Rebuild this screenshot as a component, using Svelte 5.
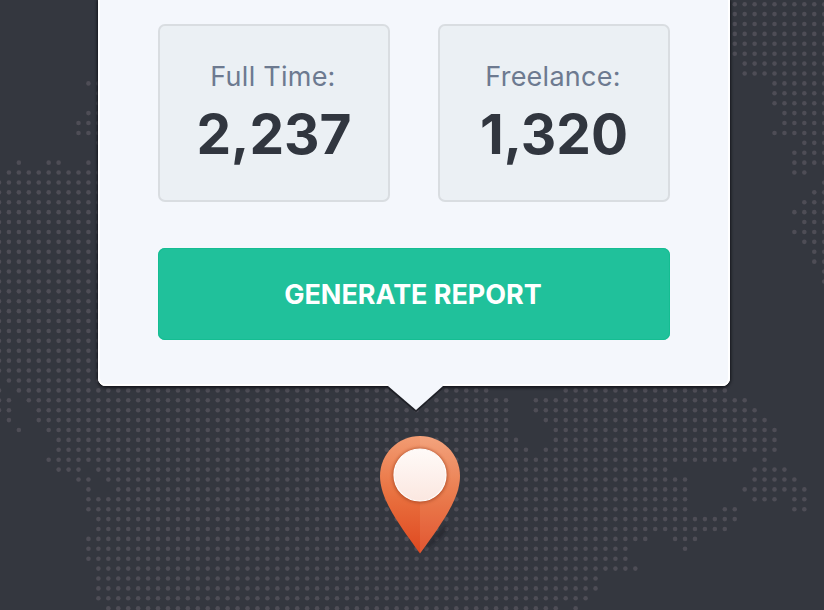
<script>
  const stats = [
    { label: 'Full Time:', value: '2,237' },
    { label: 'Freelance:', value: '1,320' },
  ];

  // Dotted world map: for each row, the inclusive column ranges that hold dots.
  const rows = {
    0: [[73, 82]], 1: [[73, 82]], 2: [[73, 82]], 3: [[73, 82]], 4: [[73, 82]], 5: [[73, 82]],
    6: [[74, 82]], 7: [[74, 82]],
    8: [[8, 9], [77, 82]], 9: [[9, 9], [77, 82]], 10: [[9, 9], [77, 82]],
    11: [[8, 9], [78, 82]], 12: [[7, 9], [78, 82]], 13: [[7, 9], [77, 82]],
    14: [[9, 9], [80, 82]], 15: [[79, 82]],
    16: [[1, 1], [4, 5], [8, 8], [79, 82]],
    17: [[0, 9], [79, 80]], 18: [[-1, 9], [82, 82]], 19: [[-1, 9], [81, 82]],
    20: [[-1, 9], [80, 82]], 21: [[-1, 9], [79, 82]], 22: [[-1, 9], [80, 82]],
    23: [[-1, 9], [79, 82]], 24: [[-1, 9], [80, 82]], 25: [[-1, 9], [81, 82]],
    26: [[-1, 9], [81, 82]], 27: [[-1, 9], [82, 82]], 28: [[-1, 9], [82, 82]],
    38: [[0, 9]],
    39: [[-1, -1], [1, 48], [56, 72]],
    40: [[-1, 0], [2, 50], [53, 74]],
    41: [[-1, 0], [3, 50], [53, 75]],
    42: [[0, 0], [3, 50], [54, 76]],
    43: [[1, 1], [4, 50], [55, 77]],
    44: [[5, 51], [55, 77]],
    45: [[5, 52], [54, 77]],
    46: [[4, 73], [76, 76]],
    47: [[5, 7], [9, 66], [75, 78]],
    48: [[7, 8], [10, 68], [75, 79]],
    49: [[8, 8], [11, 68], [74, 80]],
    50: [[8, 68], [75, 77], [79, 80]],
    51: [[8, 68], [72, 73], [79, 80]],
    52: [[9, 73]],
    53: [[9, 72]],
    54: [[8, 64], [67, 69]],
    55: [[8, 62], [68, 68]],
    56: [[8, 62]],
    57: [[9, 63]],
    58: [[9, 59]],
    59: [[9, 59]],
    60: [[9, 58]],
    61: [[10, 55], [57, 57]],
  };
  // The left landmass is solid through these rows.
  for (let r = 29; r < 38; r++) rows[r] = [[-1, 9]];

  const dots = [];
  for (const [r, ranges] of Object.entries(rows)) {
    for (const [from, to] of ranges) {
      for (let c = from; c <= to; c++) {
        dots.push({ x: 8.9 + c * 9.943, y: 4.2 + r * 9.902 });
      }
    }
  }
</script>

<main>
  <svg class="map" width="824" height="610" viewBox="0 0 824 610" aria-hidden="true">
    {#each dots as d}
      <circle cx={d.x} cy={d.y} r="2.3" />
    {/each}
  </svg>

  <section class="card">
    <div class="stats">
      {#each stats as s}
        <div class="stat">
          <span class="label">{s.label}</span>
          <span class="value">{s.value}</span>
        </div>
      {/each}
    </div>
    <button type="button">GENERATE REPORT</button>
    <svg class="tip" width="60" height="30" viewBox="0 0 60 30" aria-hidden="true">
      <path d="M4 4 L31 27 L57 4" fill="none" stroke="#15171c" stroke-width="2" opacity="0.7" />
      <path d="M3 0 L3 2 L31 26 L58 2 L58 0Z" fill="#f4f7fc" />
    </svg>
  </section>

  <svg class="pin" width="100" height="130" viewBox="370 430 100 130" aria-hidden="true">
    <defs>
      <linearGradient id="body" x1="0" y1="0" x2="0" y2="1">
        <stop offset="0" stop-color="#f29c73" />
        <stop offset="0.5" stop-color="#e9713f" />
        <stop offset="1" stop-color="#df4820" />
      </linearGradient>
      <linearGradient id="face" x1="0" y1="0" x2="0" y2="1">
        <stop offset="0" stop-color="#fffaf8" />
        <stop offset="1" stop-color="#fbe7e0" />
      </linearGradient>
      <filter id="soft" x="-30%" y="-30%" width="160%" height="160%">
        <feGaussianBlur stdDeviation="1.6" />
      </filter>
    </defs>
    <path d="M420 552 L446 524 Q449 529 443 535 Q434 545 420 552Z" fill="#202329" opacity="0.6" filter="url(#soft)" />
    <path d="M420 436 C442 436 460 454 460 476 C460 498 443 522 420 553.500 C397 522 380 498 380 476 C380 454 398 436 420 436Z" fill="url(#body)" />
    <path d="M420 436 C442 436 460 454 460 476 C460 498 443 522 420 553.500Z" fill="#fff" opacity="0.08" />
    <circle cx="420" cy="475.500" r="28" fill="#a84722" opacity="0.65" filter="url(#soft)" />
    <circle cx="420" cy="475" r="26" fill="url(#face)" stroke="#fff" stroke-width="1.200" />
  </svg>
</main>

<style>
  :global(body) {
    margin: 0;
    overflow: hidden;
  }
  main {
    position: relative;
    width: 824px;
    height: 610px;
    overflow: hidden;
    background: #34373f;
    font-family: Inter, Roboto, sans-serif;
  }
  .map {
    position: absolute;
    inset: 0;
    fill: #4e4d56;
  }
  .card {
    position: relative;
    box-sizing: border-box;
    width: 632px;
    height: 386px;
    margin-left: 98px;
    padding: 24px 60px 0;
    border-radius: 0 0 8px 8px;
    background: #f4f7fc;
    box-shadow: inset 0 -2px 0 #fff, inset 2px 0 0 #fff, inset -2px 0 0 #fff, 0 1px 3px 1px #15171c;
  }
  .stats {
    display: flex;
    gap: 48px;
  }
  .stat {
    box-sizing: border-box;
    display: flex;
    flex-direction: column;
    align-items: center;
    width: 232px;
    height: 178px;
    padding-top: 35px;
    border: 2px solid #d9dde1;
    border-radius: 7px;
    background: #ebf0f4;
  }
  .label,
  .value {
    display: block;
    white-space: nowrap;
  }
  .label {
    height: 32px;
    padding-right: 2px;
    line-height: 32px;
    font-size: 27px;
    letter-spacing: 0.25px;
    color: #6d7a90;
  }
  .value {
    height: 66px;
    margin-top: 8px;
    line-height: 66px;
    font-size: 55px;
    font-weight: 700;
    color: #31363f;
  }
  button {
    display: flex;
    align-items: center;
    justify-content: center;
    width: 512px;
    height: 92px;
    margin: 46px 0 0;
    padding: 0 2px 0 0;
    border: 0;
    border-radius: 7px;
    background: #20c19b;
    box-shadow: inset 0 0 0 1px #15bd92;
    color: #fff;
    font: 700 27px Inter, Roboto, sans-serif;
    letter-spacing: -0.05px;
    white-space: nowrap;
  }
  .tip {
    position: absolute;
    left: 287px;
    top: 384px;
  }
  .pin {
    position: absolute;
    left: 370px;
    top: 430px;
  }
</style>
